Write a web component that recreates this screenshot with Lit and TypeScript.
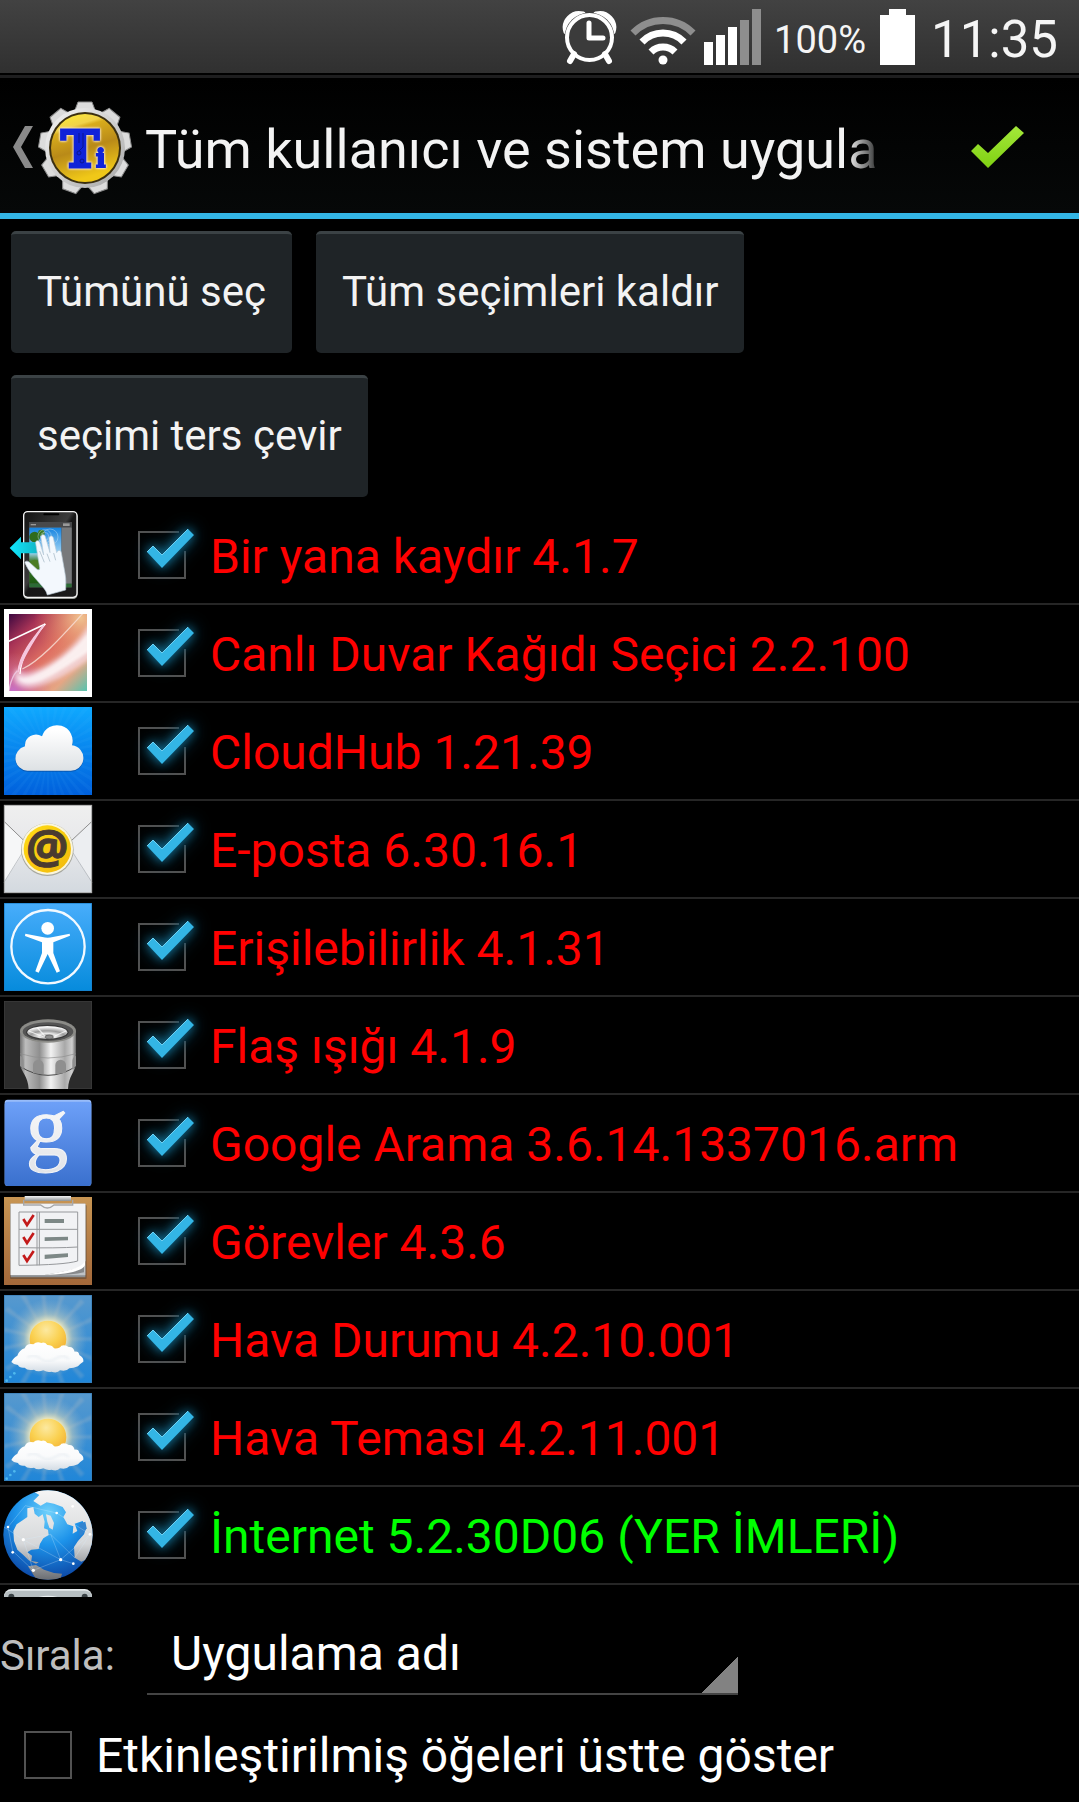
import { LitElement, html, svg, css, SVGTemplateResult } from "lit";
import { customElement, property } from "lit/decorators.js";

interface AppEntry {
  icon: string;
  name: string;
  green?: boolean;
}

const ENTRIES: AppEntry[] = [
  { icon: "swipe", name: "Bir yana kaydır 4.1.7" },
  { icon: "wallpaper", name: "Canlı Duvar Kağıdı Seçici 2.2.100" },
  { icon: "cloud", name: "CloudHub 1.21.39" },
  { icon: "mail", name: "E-posta 6.30.16.1" },
  { icon: "access", name: "Erişilebilirlik 4.1.31" },
  { icon: "flash", name: "Flaş ışığı 4.1.9" },
  { icon: "google", name: "Google Arama 3.6.14.1337016.arm" },
  { icon: "tasks", name: "Görevler 4.3.6" },
  { icon: "weather", name: "Hava Durumu 4.2.10.001" },
  { icon: "weather", name: "Hava Teması 4.2.11.001" },
  { icon: "globe", name: "İnternet 5.2.30D06 (YER İMLERİ)", green: true },
  { icon: "panel", name: "" },
];

const rays = (cx: number, cy: number, count: number, len: number, half: number) =>
  Array.from({ length: count }, (_, i) => {
    const a = (i / count) * Math.PI * 2;
    const p = (t: number) => `${cx + len * Math.cos(t)},${cy + len * Math.sin(t)}`;
    return svg`<polygon points="${cx},${cy} ${p(a - half)} ${p(a + half)}" />`;
  });

const ICONS: Record<string, SVGTemplateResult> = {
  swipe: svg`
    <defs>
      <linearGradient id="sky" x1="0" y1="0" x2="0" y2="1"><stop offset="0" stop-color="#1583e0"/><stop offset="0.45" stop-color="#9fd4f5"/><stop offset="0.6" stop-color="#3f7a2a"/><stop offset="1" stop-color="#1d5a12"/></linearGradient>
      <linearGradient id="body" x1="0" y1="0" x2="1" y2="1"><stop offset="0" stop-color="#111"/><stop offset="0.45" stop-color="#3c3c3c"/><stop offset="0.5" stop-color="#161616"/><stop offset="1" stop-color="#1c1c1c"/></linearGradient>
      <linearGradient id="arrow" x1="0" x2="1"><stop offset="0" stop-color="#10e8ff"/><stop offset="1" stop-color="#12b4c4"/></linearGradient>
    </defs>
    <rect x="57" y="2" width="164" height="262" rx="14" fill="#9a9f9a"/>
    <rect x="59" y="2" width="160" height="257" rx="12" fill="url(#body)" stroke="#f4f4f4" stroke-width="4"/>
    <rect x="118" y="7" width="48" height="6" rx="3" fill="#000"/>
    <rect x="76" y="33" width="127" height="196" fill="#5d5f61"/>
    <rect x="76" y="33" width="127" height="16" fill="#48494b"/>
    <rect x="80" y="39" width="16" height="4" fill="#999"/><rect x="177" y="37" width="20" height="8" fill="#999"/>
    <rect x="76" y="50" width="96" height="168" fill="url(#sky)"/>
    <circle cx="92" cy="78" r="16" fill="#2f6b1c"/><circle cx="92" cy="162" r="16" fill="#4b7c22"/><circle cx="112" cy="66" r="10" fill="#3c7a24"/>
    <rect x="174" y="50" width="29" height="168" fill="#77797b"/>
    <rect x="76" y="218" width="127" height="11" fill="#2c6b35"/>
    <g fill="none" stroke="#d5e8f4" stroke-width="2" opacity="0.6"><circle cx="122" cy="76" r="12"/><circle cx="122" cy="76" r="20"/><circle cx="138" cy="78" r="24"/></g>
    <path d="M17 111 51 77V94H104V127H51V145Z" fill="url(#arrow)"/>
    <path d="M63 156c-2-5 6-8 12-3l24 22c4 3 9 2 8-5l-12-74c-1-8 9-10 12-2l12 38-8-52c-1-10 10-12 13-3l14 48-3-42c0-9 10-11 13-2l10 44c3-8 12-10 14 0l11 62c4 20 2 35 2 50l-55 15c-3-14-12-22-22-34-16-18-34-36-45-62Z" fill="#f3f8fd" stroke="#b9cad6" stroke-width="2"/>
    <path d="M107 120l14 34M129 128l9 24M149 126l6 22" stroke="#9fb2bf" stroke-width="2" fill="none"/>`,
  wallpaper: svg`
    <defs>
      <linearGradient id="wbase" x1="0" y1="0" x2="1" y2="1"><stop offset="0" stop-color="#3c0840"/><stop offset="0.22" stop-color="#a83356"/><stop offset="0.5" stop-color="#df6f62"/><stop offset="0.78" stop-color="#e5a684"/><stop offset="1" stop-color="#55c4b0"/></linearGradient>
      <radialGradient id="wwarm" cx="0.92" cy="0.05" r="0.6"><stop offset="0" stop-color="#f0c491"/><stop offset="1" stop-color="#e07a5a" stop-opacity="0"/></radialGradient>
      <radialGradient id="wviolet" cx="0.05" cy="1" r="0.5"><stop offset="0" stop-color="#c66ec8"/><stop offset="1" stop-color="#d070a0" stop-opacity="0"/></radialGradient>
      <filter id="wblur"><feGaussianBlur stdDeviation="6"/></filter>
      <filter id="wsoft"><feGaussianBlur stdDeviation="4"/></filter>
      <clipPath id="wclip"><rect x="15" y="15" width="234" height="231"/></clipPath>
    </defs>
    <rect width="264" height="264" fill="#fff"/>
    <g clip-path="url(#wclip)">
      <rect x="15" y="15" width="234" height="231" fill="url(#wbase)"/>
      <rect x="15" y="15" width="234" height="231" fill="url(#wwarm)"/>
      <rect x="15" y="15" width="234" height="231" fill="url(#wviolet)"/>
      <path d="M264 30C225 100 160 160 90 186 62 197 44 195 40 174 20 205 30 235 75 236 140 232 205 185 264 146Z" fill="#f6dfe9" opacity="0.75" filter="url(#wblur)"/>
      <path d="M264 56C215 125 150 172 95 196 70 208 50 208 42 202 44 226 75 228 110 216 165 192 220 150 264 122Z" fill="#fff" opacity="0.7" filter="url(#wsoft)"/>
      <path d="M12 98 124 45" fill="none" stroke="#fff" stroke-width="5"/>
      <path d="M124 45C90 85 50 145 48 195" fill="none" stroke="#fff" stroke-width="4"/>
      <path d="M120 48C85 90 45 140 42 190 55 150 85 100 120 48Z" fill="#f6c6de" stroke="#f6c6de" stroke-width="4"/>
      <path d="M236 14C180 75 110 155 55 180" fill="none" stroke="#f7ddd4" stroke-width="4" opacity="0.85"/>
      <path d="M40 185c-14 15-22 40-25 60" fill="none" stroke="#f1cfe8" stroke-width="4" opacity="0.8"/>
    </g>`,
  cloud: svg`
    <defs>
      <linearGradient id="cbg" x1="0" y1="0" x2="0" y2="1"><stop offset="0" stop-color="#0fa9ff"/><stop offset="1" stop-color="#0060dc"/></linearGradient>
      <linearGradient id="cfill" x1="0" y1="70" x2="0" y2="192" gradientUnits="userSpaceOnUse"><stop offset="0" stop-color="#fff"/><stop offset="1" stop-color="#dde1e4"/></linearGradient>
      <clipPath id="cclip"><rect width="264" height="264"/></clipPath>
    </defs>
    <rect width="264" height="264" fill="url(#cbg)"/>
    <g fill="#5cc0ff" opacity="0.07" clip-path="url(#cclip)">${rays(132, 140, 36, 200, 0.035)}</g>
    <path d="M70 194a37 37 0 0 1-7-73A33 33 0 0 1 114 91 46 46 0 0 1 204 118a38 38 0 0 1-8 76Z" fill="#0a3f88" opacity="0.55"/>
    <path d="M70 191a37 37 0 0 1-7-73A33 33 0 0 1 114 88 46 46 0 0 1 204 115a38 38 0 0 1-8 76Z" fill="url(#cfill)"/>`,
  mail: svg`
    <defs>
      <linearGradient id="mbg" x1="0" y1="0" x2="0" y2="1"><stop offset="0" stop-color="#efefef"/><stop offset="0.5" stop-color="#e6e7ea"/><stop offset="1" stop-color="#d3d9df"/></linearGradient>
      <linearGradient id="myel" x1="0" y1="0" x2="1" y2="1"><stop offset="0" stop-color="#ffdc14"/><stop offset="1" stop-color="#f2b90c"/></linearGradient>
    </defs>
    <rect width="264" height="264" fill="url(#mbg)"/>
    <path d="M0 50 60 108V140L0 232Z" fill="#f6f7f8"/><path d="M264 50 204 108V140L264 232Z" fill="#eceef1"/>
    <path d="M0 49 60 107M264 49 200 109" stroke="#8e8e8e" stroke-width="3"/>
    <path d="M56 142 0 232M206 142 264 232" stroke="#a6abb0" stroke-width="2"/>
    <rect x="1" y="1" width="262" height="262" fill="none" stroke="#a9a9a9" stroke-width="3"/>
    <circle cx="130" cy="134" r="79" fill="#a8a8a0"/><circle cx="130" cy="132" r="77" fill="#faf6dc"/><circle cx="130" cy="132" r="71" fill="url(#myel)"/>
    <text x="130" y="173" text-anchor="middle" font-family="Open Sans, sans-serif" font-weight="700" font-size="142" fill="#4a3b30" stroke="#4a3b30" stroke-width="3">@</text>`,
  access: svg`
    <defs><linearGradient id="abg" x1="0" y1="0" x2="0" y2="1"><stop offset="0" stop-color="#48adfb"/><stop offset="1" stop-color="#068bdc"/></linearGradient></defs>
    <rect width="264" height="264" fill="url(#abg)"/><rect x="1" y="1" width="262" height="262" fill="none" stroke="#1b7fc8" stroke-width="2"/>
    <circle cx="132" cy="131" r="110" fill="none" stroke="#f2f9ff" stroke-width="7"/>
    <circle cx="131" cy="76" r="19" fill="#fff"/>
    <path d="M64 92 115 102Q131 106 147 102L197 92 198 98 148 118V150L168 205 158 209 131 153 104 209 94 205 114 150V118L63 99Z" fill="#fff"/>`,
  flash: svg`
    <defs>
      <linearGradient id="fm" x1="0" x2="1"><stop offset="0" stop-color="#6f6f6f"/><stop offset="0.1" stop-color="#bdbdbd"/><stop offset="0.35" stop-color="#8f8f8f"/><stop offset="0.55" stop-color="#f2f2f2"/><stop offset="0.8" stop-color="#a8a8a8"/><stop offset="0.93" stop-color="#d0d0d0"/><stop offset="1" stop-color="#666"/></linearGradient>
      <radialGradient id="fl" cx="0.5" cy="0.8" r="0.7"><stop offset="0" stop-color="#777"/><stop offset="0.3" stop-color="#e8e8e8"/><stop offset="0.6" stop-color="#9b9b9b"/><stop offset="1" stop-color="#f4f4f4"/></radialGradient>
    </defs>
    <rect width="264" height="264" fill="#2b2b2b"/><rect x="1" y="1" width="262" height="262" fill="none" stroke="#3d3d3d" stroke-width="2"/>
    <path d="M48 90H216V190C212 215 194 225 192 264H74C72 225 52 215 48 190Z" fill="url(#fm)"/>
    <path d="M48 158Q132 184 216 158" fill="none" stroke="#8c8c8c" stroke-width="2"/>
    <path d="M48 196Q132 250 216 196" fill="none" stroke="#4a4a4a" stroke-width="3"/>
    <path d="M87 216V192a16 16 0 0 1 32 0v28ZM154 220V192a16 16 0 0 1 32 0v23ZM48 164q12 4 11 20v22l-11-12ZM216 164q-12 4-11 20v22l11-12Z" fill="#8f8f8f"/>
    <ellipse cx="132" cy="90" rx="84" ry="35" fill="#8b8b87"/><ellipse cx="132" cy="92" rx="76" ry="28" fill="#555"/>
    <ellipse cx="130" cy="94" rx="64" ry="23" fill="#3a3a3a"/><ellipse cx="130" cy="94" rx="60" ry="19" fill="url(#fl)"/>
    <path d="M74 90 120 108M186 90 146 108M100 80l25 28" stroke="#fff" stroke-width="4" opacity="0.7"/><ellipse cx="136" cy="108" rx="12" ry="6" fill="#8d8d8d" stroke="#555" stroke-width="2"/>`,
  google: svg`
    <defs>
      <linearGradient id="gbg" x1="0" y1="0" x2="0" y2="1"><stop offset="0" stop-color="#6da0f8"/><stop offset="1" stop-color="#3a70ce"/></linearGradient>
      <linearGradient id="gg" x1="0" y1="0" x2="0" y2="1"><stop offset="0" stop-color="#fff"/><stop offset="1" stop-color="#e2e4e8"/></linearGradient>
    </defs>
    <rect x="2" y="2" width="260" height="259" rx="9" fill="#98bcf9"/><rect x="2" y="8" width="260" height="253" rx="9" fill="url(#gbg)"/>
    <text x="129" y="168" text-anchor="middle" font-family="Liberation Serif, serif" font-size="254" fill="url(#gg)" stroke="#f4f5f7" stroke-width="3">g</text>`,
  tasks: svg`
    <defs>
      <linearGradient id="tw" x1="0" y1="0" x2="0" y2="1"><stop offset="0" stop-color="#c89553"/><stop offset="1" stop-color="#a3683a"/></linearGradient>
      <linearGradient id="tc" x1="0" y1="0" x2="0" y2="1"><stop offset="0" stop-color="#f4f4f4"/><stop offset="1" stop-color="#8d9294"/></linearGradient>
    </defs>
    <rect width="264" height="264" fill="url(#tw)"/>
    <rect x="18" y="24" width="230" height="222" rx="3" fill="#5d4a38" opacity="0.6"/>
    <path d="M20 20H244V241H20Z" fill="#8c8f92"/><path d="M20 20H244V235H20Z" fill="#bfc3c6"/>
    <path d="M20 20H244V190C244 212 200 226 122 234H20Z" fill="#f1f2f4"/>
    <path d="M122 234C170 226 228 214 240 206V226Q200 236 122 234Z" fill="#87898b"/><path d="M122 234C185 222 240 214 243 188V204C238 222 190 232 122 234Z" fill="#fff"/>
    <path d="M45 45H221V192Q180 204 45 205ZM45 97H221M45 152Q160 154 221 150M99 45V205M106 45V205" fill="none" stroke="#96989b" stroke-width="3"/>
    <g fill="#7d8886"><path d="M122 66h58v12h-58ZM122 121l70-2v11l-70 2ZM122 173l70-4v11l-70 6Z"/></g>
    <g fill="none" stroke="#c31a1a" stroke-width="8"><path d="M58 66 69 84 89 54"/><path d="M58 120 69 138 89 108"/><path d="M58 174 69 192 89 162"/></g>
    <path d="M59 8V24H110Q130 42 150 24H206V8" fill="none" stroke="#a6a8aa" stroke-width="4"/>
    <rect x="62" y="-3" width="139" height="15" fill="url(#tc)"/>`,
  weather: svg`
    <defs>
      <linearGradient id="hbg" x1="0" y1="0" x2="0" y2="1"><stop offset="0" stop-color="#5799ce"/><stop offset="1" stop-color="#2086d8"/></linearGradient>
      <radialGradient id="hglow" cx="132" cy="130" r="118" gradientUnits="userSpaceOnUse"><stop offset="0.42" stop-color="#fff3bf" stop-opacity="0.95"/><stop offset="0.62" stop-color="#d9d8bc" stop-opacity="0.5"/><stop offset="1" stop-color="#9db8cc" stop-opacity="0"/></radialGradient>
      <radialGradient id="hsun" cx="0.45" cy="0.25" r="0.8"><stop offset="0" stop-color="#fce9a0"/><stop offset="0.5" stop-color="#fad04f"/><stop offset="1" stop-color="#f0a72c"/></radialGradient>
      <linearGradient id="hcl" x1="0" y1="0" x2="0" y2="1"><stop offset="0" stop-color="#fff"/><stop offset="0.6" stop-color="#f9fafb"/><stop offset="1" stop-color="#d3dce4"/></linearGradient>
      <clipPath id="hclip"><rect width="264" height="264"/></clipPath>
      <filter id="hsoft"><feGaussianBlur stdDeviation="3"/></filter>
    </defs>
    <rect width="264" height="264" fill="url(#hbg)"/>
    <g clip-path="url(#hclip)"><g fill="#cfc6bf" opacity="0.2" filter="url(#hsoft)">${rays(132, 132, 15, 155, 0.05)}</g><circle cx="132" cy="130" r="118" fill="url(#hglow)"/></g>
    <rect x="1" y="1" width="262" height="262" fill="none" stroke="#3a7db4" stroke-width="2"/>
    <circle cx="132" cy="132" r="55" fill="url(#hsun)"/>
    <path d="M22 201Q30 186 40 182 46 165 62 160 68 144 88 148 98 138 112 144 122 140 130 150 144 150 150 160 166 162 172 152 184 148 194 156 208 154 212 170 224 168 226 180 240 188 238 200 228 206 222 214 208 220 196 220 188 230 168 226 160 236 142 230 132 234 118 226 100 232 90 224 70 228 62 218 46 220 42 210 28 208 22 201Z" fill="url(#hcl)"/>
    <path d="M70 187q20-12 40 4t45 0 40 2" fill="none" stroke="#e6ecf1" stroke-width="6" opacity="0.7" filter="url(#hsoft)"/>
    <g fill="#4fb9ee"><circle cx="8" cy="257" r="4"/><circle cx="19" cy="246" r="4"/><circle cx="31" cy="235" r="4"/></g>`,
  globe: svg`
    <defs>
      <radialGradient id="ocean" cx="0.5" cy="0.25" r="0.8"><stop offset="0" stop-color="#6fd0fb"/><stop offset="0.45" stop-color="#1d93ea"/><stop offset="1" stop-color="#0a3f9e"/></radialGradient>
      <linearGradient id="land" x1="0" y1="0" x2="0" y2="264" gradientUnits="userSpaceOnUse"><stop offset="0" stop-color="#f4f4f4"/><stop offset="0.6" stop-color="#d6d8da"/><stop offset="1" stop-color="#6d7075"/></linearGradient>
      <clipPath id="gclip"><circle cx="132" cy="132" r="134"/></clipPath>
    </defs>
    <circle cx="132" cy="132" r="134" fill="url(#ocean)"/>
    <g clip-path="url(#gclip)">
      <g fill="url(#land)">
        <path d="M88 30 106 12 92 4 120-6H230L275 60V150L260 200 232 212 212 200 210 168 222 150 240 130 246 112 236 90 212 98 220 120 206 128 208 106 190 100 178 78 186 64 176 48 150 38 128 34 110 44Z"/>
        <path d="M70 52 88 48 92 68 104 78 116 70 122 92 120 112 132 116 134 132 118 142 108 158 104 174 82 176 70 184 84 194 82 210 104 214 96 218 74 208 58 192 40 176 30 150 28 120 38 100 56 88 70 78Z"/>
        <path d="M126 70 140 74 150 96 146 116 136 110 130 92Z"/>
        <path d="M72 226 96 222 120 236 150 246 174 248 168 270H100Z"/>
      </g>
      <path d="M226 98l18-6 4 20-14 20-8 2Z" fill="#3284d0"/>
      <g stroke="#d8efff" stroke-width="2" opacity="0.4" fill="none"><path d="M0 108 58 146 170 206 258 130 212 200 140 130 58 146 88 238 170 206 208 218M12 108 26 180 88 238M12 108 64 44 158 66 258 130M140 130 170 206"/></g>
      <g fill="#fff"><circle cx="12" cy="108" r="4"/><circle cx="58" cy="146" r="5"/><circle cx="170" cy="206" r="5"/><circle cx="158" cy="66" r="4"/><circle cx="258" cy="130" r="4"/><circle cx="26" cy="184" r="4"/><circle cx="88" cy="238" r="5"/><circle cx="208" cy="218" r="4"/><circle cx="206" cy="46" r="4"/></g>
    </g>`,
  panel: svg`
    <rect width="264" height="264" rx="22" fill="#e3e8ea"/><rect x="0" y="5" width="264" height="259" rx="20" fill="#b6bec1"/>
    <circle cx="22" cy="23" r="9" fill="#3a4246"/><circle cx="242" cy="23" r="9" fill="#3a4246"/>
    <circle cx="132" cy="120" r="100" fill="#e8eef0"/>`,
};

@customElement("app-icon")
export class AppIcon extends LitElement {
  @property() kind = "";

  static styles = css`
    :host {
      display: block;
    }
    .art {
      display: block;
      width: 88px;
      height: 88px;
      overflow: visible;
    }
  `;

  render() {
    return html`<svg class="art" viewBox="0 0 264 264" aria-hidden="true">${ICONS[this.kind]}</svg>`;
  }
}

@customElement("holo-check")
export class HoloCheck extends LitElement {
  @property() label = "";
  @property({ type: Boolean }) checked = false;
  @property({ type: Boolean }) green = false;
  @property({ type: Boolean }) plain = false;

  static styles = css`
    :host {
      display: block;
      min-width: 0;
    }
    .field {
      display: flex;
      align-items: center;
      gap: 24px;
      color: #ff0000;
      font-size: 48px;
      line-height: 56px;
      white-space: nowrap;
    }
    .green {
      color: #00ff00;
    }
    .plain {
      color: #ffffff;
    }
    .box {
      display: grid;
      flex: none;
      width: 48px;
      height: 48px;
    }
    .input {
      grid-area: 1 / 1;
      appearance: none;
      margin: 0;
      width: 48px;
      height: 48px;
    }
    .art {
      grid-area: 1 / 1;
      width: 48px;
      height: 48px;
      overflow: visible;
      pointer-events: none;
    }
    .tick {
      display: none;
      filter: drop-shadow(0 0 5px #126a8e) drop-shadow(0 0 8px #0a465e);
    }
    .input:checked + .art .tick {
      display: block;
    }
    .input:checked + .art .full {
      display: none;
    }
    .text {
      padding-top: 3px;
    }
  `;

  render() {
    const tone = this.plain ? "plain" : this.green ? "green" : "";
    return html`<label class="field ${tone}">
      <span class="box">
        <input class="input" type="checkbox" .checked=${this.checked} />
        <svg class="art" viewBox="0 0 48 48" aria-hidden="true">
          <path d="M41 1H1V47H47V20" fill="none" stroke="#525252" stroke-width="2" />
          <path class="full" d="M41 1H47V20" fill="none" stroke="#525252" stroke-width="2" />
          <g class="tick">
            <path d="M9 21 15 15 24 24 50-2 56 4 24 37Z" fill="#33b5e5" />
            <path d="M9 21 15 15 24 24 50-2" fill="none" stroke="#6fd0f2" stroke-width="1" />
          </g>
        </svg>
      </span>
      <span class="text">${this.label}</span>
    </label>`;
  }
}

@customElement("status-bar")
export class StatusBar extends LitElement {
  static styles = css`
    :host {
      display: block;
    }
    .bar {
      display: flex;
      justify-content: flex-end;
      align-items: center;
      height: 73px;
      padding-right: 21px;
      background: linear-gradient(#424242, #303030);
      border-bottom: 2px solid #000;
      color: #f5f5f5;
    }
    .icon {
      display: block;
      flex: none;
      height: 73px;
    }
    .alarm {
      width: 56px;
      margin-right: 12px;
    }
    .wifi {
      width: 66px;
      margin-right: 8px;
    }
    .signal {
      width: 57px;
      margin-right: 13px;
    }
    .percent {
      font-size: 38px;
      line-height: 44px;
      padding-top: 6px;
    }
    .battery {
      width: 35px;
      margin: 0 16px 0 14px;
    }
    .clock {
      font-size: 51px;
      line-height: 58px;
      padding-top: 6px;
    }
  `;

  render() {
    return html`<div class="bar">
      <svg class="icon alarm" viewBox="0 0 56 73" aria-hidden="true">
        <path d="M4 32A14 14 0 0 1 21 14ZM51 32A14 14 0 0 0 34 14Z" fill="#fff" stroke="#fff" stroke-width="5" stroke-linejoin="round" />
        <circle cx="27.500" cy="37.500" r="25" fill="#3b3b3b" />
        <circle cx="27.500" cy="37.500" r="22.500" fill="none" stroke="#fff" stroke-width="4" />
        <path d="M27 23V38H41" fill="none" stroke="#fff" stroke-width="5" stroke-linecap="round" stroke-linejoin="round" />
        <path d="M12 54 8 61M43 54 47 61" stroke="#fff" stroke-width="6" stroke-linecap="round" />
      </svg>
      <svg class="icon wifi" viewBox="0 0 66 73" aria-hidden="true">
        <g fill="none" stroke="#fff" stroke-width="7">
          <path d="M3 33A42 42 0 0 1 63 33" stroke="#8e8e8e" />
          <path d="M12 42A29 29 0 0 1 54 42" />
          <path d="M21 52A17 17 0 0 1 45 52" />
        </g>
        <circle cx="33" cy="60" r="4.500" fill="#fff" />
      </svg>
      <svg class="icon signal" viewBox="0 0 57 73" aria-hidden="true">
        <path d="M0 42h9v23h-9ZM12 35h9v30h-9ZM24 27h9v38h-9Z" fill="#fff" />
        <path d="M36 20h9v45h-9ZM48 9h9v56h-9Z" fill="#8e8e8e" />
      </svg>
      <span class="percent">100%</span>
      <svg class="icon battery" viewBox="0 0 35 73" aria-hidden="true">
        <path d="M9 9H26V15H35V65H0V15H9Z" fill="#fff" />
      </svg>
      <span class="clock">11:35</span>
    </div>`;
  }
}

@customElement("title-bar")
export class TitleBar extends LitElement {
  static styles = css`
    :host {
      display: block;
    }
    .bar {
      display: flex;
      align-items: center;
      height: 135px;
      padding: 0 54px 0 13px;
      border-top: 3px solid #1e1e1f;
      border-bottom: 6px solid #33b5e5;
      background: linear-gradient(#000, #060808);
    }
    .nav {
      display: flex;
      align-items: center;
      gap: 6px;
      flex: none;
      margin-right: 14px;
      padding: 2px 0 0;
      border: 0;
      background: none;
    }
    .chevron {
      display: block;
      width: 20px;
      height: 42px;
    }
    .logo {
      display: block;
      width: 92px;
      height: 92px;
      overflow: visible;
    }
    .title {
      flex: 1;
      min-width: 0;
      margin: 0 86px 0 0;
      padding-top: 8px;
      overflow: hidden;
      white-space: nowrap;
      font-size: 54px;
      line-height: 72px;
      font-weight: 400;
      color: #f3f3f3;
      mask-image: linear-gradient(to left, transparent, #000 36px);
    }
    .done {
      flex: none;
      padding: 2px 0 0;
      border: 0;
      background: none;
    }
    .tick {
      display: block;
      width: 55px;
      height: 44px;
    }
    .letters {
      filter: drop-shadow(0 0 1px #fff2dc) drop-shadow(0 0 1px #f3dcc0);
    }
  `;

  render() {
    const teeth = Array.from(
      { length: 9 },
      (_, i) => svg`<path d="M36 9 39 1H53L56 9Z" transform="rotate(${i * 40} 46 47)" />`
    );
    return html`<header class="bar">
      <button class="nav" aria-label="Geri">
        <svg class="chevron" viewBox="0 0 20 42" aria-hidden="true"><path d="M12 0H20L8 21 20 42H12L0 21Z" fill="#8a8a8a" /></svg>
        <svg class="logo" viewBox="0 0 92 92" aria-hidden="true">
          <defs>
            <linearGradient id="steel" x1="0" y1="0" x2="1" y2="1"><stop offset="0" stop-color="#f6f6f6" /><stop offset="0.5" stop-color="#d0d0d0" /><stop offset="1" stop-color="#a5a5a5" /></linearGradient>
            <linearGradient id="gold" x1="0" y1="0" x2="0.300" y2="1"><stop offset="0" stop-color="#fff030" /><stop offset="0.25" stop-color="#f1d24a" /><stop offset="0.3" stop-color="#d8ac1c" /><stop offset="0.6" stop-color="#b98a18" /><stop offset="1" stop-color="#f0c818" /></linearGradient>
          </defs>
          <g fill="#dcdcdc" stroke="#8b8b8b" stroke-width="1">${teeth}</g>
          <circle cx="46" cy="47" r="40" fill="url(#steel)" />
          <circle cx="46" cy="47" r="36" fill="#3b2f10" />
          <circle cx="46" cy="47" r="34" fill="url(#gold)" />
          <text class="letters" x="22" y="66" font-size="51" font-family="DejaVu Serif, serif" font-weight="700" fill="#1023d8" stroke="#1023d8" stroke-width="3">T<tspan dx="-3" font-size="25" stroke-width="2">i</tspan></text>
          <g fill="none" stroke="#0a1490" stroke-width="1"><path d="M40 32V42M44 32V46L40 50" /><circle cx="40" cy="52" r="2" /><circle cx="43" cy="60" r="2" /></g>
        </svg>
      </button>
      <h1 class="title">Tüm kullanıcı ve sistem uygula</h1>
      <button class="done" aria-label="Tamam">
        <svg class="tick" viewBox="0 0 55 44" aria-hidden="true">
          <defs><linearGradient id="lime" x1="0" y1="0" x2="0" y2="1"><stop offset="0" stop-color="#a4e83a" /><stop offset="1" stop-color="#7fd012" /></linearGradient></defs>
          <path d="M1 26 8 19 18 28 46 1 54 8 18 43Z" fill="url(#lime)" />
        </svg>
      </button>
    </header>`;
  }
}

@customElement("app-root")
export class AppRoot extends LitElement {
  static styles = css`
    :host {
      display: flex;
      flex-direction: column;
      height: 100vh;
      overflow: hidden;
      background: #000;
      color: #fff;
      font-family: Roboto, "Liberation Sans", sans-serif;
    }
    .bar {
      flex: none;
    }
    .actions {
      display: flex;
      flex-wrap: wrap;
      flex: none;
      gap: 22px 24px;
      padding: 12px 11px 10px;
    }
    .action {
      height: 122px;
      padding: 0 26px 3px;
      border: 0;
      border-top: 3px solid #3b4245;
      border-radius: 5px;
      background: #1f2427;
      color: #f3f3f3;
      font: 42px/50px Roboto, "Liberation Sans", sans-serif;
    }
    .list {
      flex: 1;
      min-height: 0;
      margin: 0;
      padding: 0;
      overflow: hidden;
      list-style: none;
    }
    .row {
      display: flex;
      align-items: center;
      gap: 46px;
      height: 96px;
      padding-left: 4px;
      border-bottom: 2px solid #262626;
    }
    .sort {
      display: flex;
      flex: none;
      align-items: center;
    }
    .caption {
      flex: none;
      width: 147px;
      padding-top: 20px;
      color: #bebebe;
      font-size: 42px;
      line-height: 50px;
    }
    .select {
      flex: 0 1 591px;
      min-width: 0;
      height: 98px;
      padding: 18px 40px 0 24px;
      appearance: none;
      border: 0;
      border-bottom: 2px solid #444;
      border-radius: 0;
      background: linear-gradient(135deg, transparent 50%, #828282 50%) right bottom / 36px 36px no-repeat;
      color: #fff;
      font: 48px/56px Roboto, "Liberation Sans", sans-serif;
    }
    .enabled {
      flex: none;
      padding: 30px 24px 18px;
    }
  `;

  render() {
    return html`
      <status-bar class="bar"></status-bar>
      <title-bar class="bar"></title-bar>
      <div class="actions">
        <button class="action">Tümünü seç</button>
        <button class="action">Tüm seçimleri kaldır</button>
        <button class="action">seçimi ters çevir</button>
      </div>
      <ul class="list">
        ${ENTRIES.map(
          (e) => html`<li class="row">
            <app-icon kind=${e.icon}></app-icon>
            <holo-check label=${e.name} checked ?green=${e.green}></holo-check>
          </li>`
        )}
      </ul>
      <div class="sort">
        <label class="caption" for="order">Sırala:</label>
        <select class="select" id="order">
          <option>Uygulama adı</option>
        </select>
      </div>
      <holo-check class="enabled" plain label="Etkinleştirilmiş öğeleri üstte göster"></holo-check>
    `;
  }
}
